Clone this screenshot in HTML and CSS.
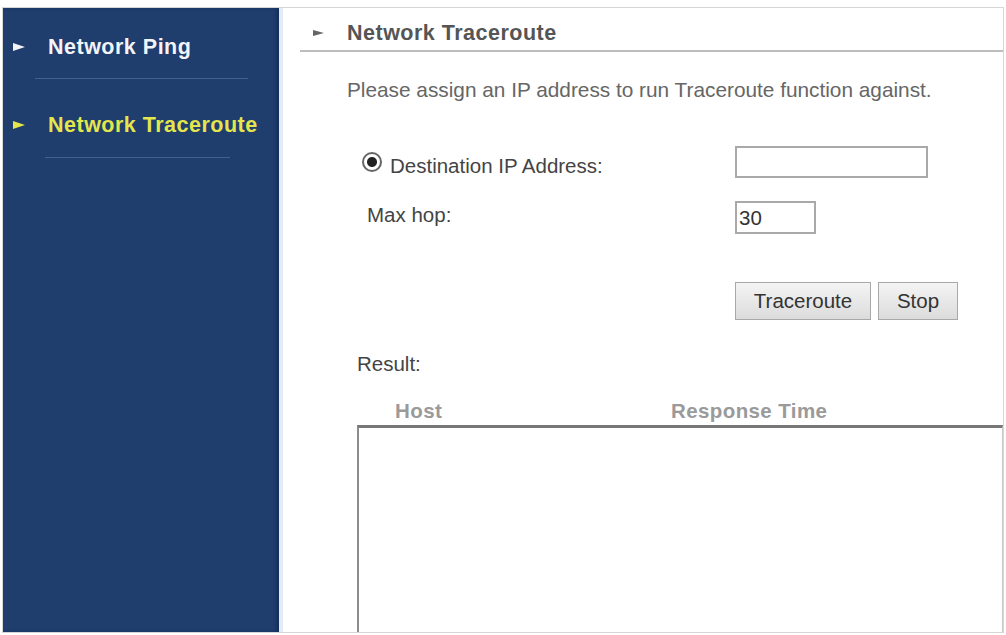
FILE: index.html
```html
<!DOCTYPE html>
<html>
<head>
<meta charset="utf-8">
<link rel="stylesheet" href="styles.css">
</head>
<body>
<div class="frame">
  <nav class="sidebar">
    <div class="nav-item nav-ping"><span class="tri"></span><span class="nav-text">Network Ping</span></div>
    <div class="divider div-1"></div>
    <div class="nav-item nav-trace active"><span class="tri"></span><span class="nav-text">Network Traceroute</span></div>
    <div class="divider div-2"></div>
  </nav>
  <main class="main">
    <div class="page-head"><span class="head-tri"></span><span class="head-text">Network Traceroute</span></div>
    <p class="desc">Please assign an IP address to run Traceroute function against.</p>
    <div class="form">
      <div class="row row-dest">
        <label class="lbl lbl-radio"><input type="radio" class="radio" checked><span>Destination IP Address:</span></label>
        <input type="text" class="field field-ip">
      </div>
      <div class="row row-hop">
        <label class="lbl lbl-hop">Max hop:</label>
        <input type="text" class="field field-hop" value="30">
      </div>
      <div class="buttons">
        <button class="btn btn-trace">Traceroute</button>
        <button class="btn btn-stop">Stop</button>
      </div>
    </div>
    <div class="result-label">Result:</div>
    <div class="result-head"><span class="col-host">Host</span><span class="col-time">Response Time</span></div>
    <div class="result-box"></div>
  </main>
</div>
</body>
</html>
```

FILE: styles.css
```css
html, body {
  margin: 0;
  padding: 0;
  background: #ffffff;
}
body {
  font-family: "Liberation Sans", Arial, sans-serif;
  width: 1006px;
  height: 635px;
  overflow: hidden;
}
.frame {
  margin-top: 7px;
  margin-left: 2px;
  width: 1000px;
  height: 624px;
  border: 1px solid #d6d6d6;
  display: flex;
  overflow: hidden;
  background: #ffffff;
}
.sidebar {
  width: 276px;
  flex: none;
  background: #1f3d6d;
  border-right: 4px solid #e3ebf6;
  box-shadow: inset -3px 0 3px rgba(10, 30, 70, 0.35);
}
.nav-item {
  display: flex;
  align-items: center;
  height: 26px;
  font-weight: bold;
  font-size: 21.5px;
  color: #f2f4f8;
  letter-spacing: 0.5px;
}
.nav-ping {
  padding-top: 26px;
  padding-bottom: 18px;
}
.nav-trace {
  padding-top: 33px;
  padding-bottom: 19px;
}
.nav-item.active {
  color: #e4e64c;
}
.tri {
  width: 0;
  height: 0;
  border-top: 4.5px solid transparent;
  border-bottom: 4.5px solid transparent;
  border-left: 12px solid currentColor;
  margin-left: 10px;
  margin-right: 23px;
}
.divider {
  height: 1px;
  background: #40608f;
}
.div-1 {
  margin-left: 32px;
  width: 213px;
}
.div-2 {
  margin-left: 42px;
  width: 185px;
}
.main {
  flex: 1;
  min-width: 0;
  position: relative;
}
.page-head {
  margin-left: 17px;
  padding-top: 12px;
  padding-bottom: 4px;
  border-bottom: 2px solid #bdbdbd;
  display: flex;
  align-items: center;
  height: 26px;
}
.head-tri {
  width: 0;
  height: 0;
  border-top: 3.5px solid transparent;
  border-bottom: 3.5px solid transparent;
  border-left: 11px solid #666;
  margin-left: 13px;
  margin-right: 23px;
}
.head-text {
  font-weight: bold;
  font-size: 21.5px;
  color: #555;
  letter-spacing: 0.5px;
}
.desc {
  margin: 25px 0 0 64px;
  font-size: 20.8px;
  line-height: 26px;
  color: #666;
}
.form {
  margin-top: 43px;
}
.row {
  display: grid;
  grid-template-columns: 373px auto;
  align-items: start;
  margin-left: 79px;
}
.lbl {
  font-size: 20.5px;
  line-height: 26px;
  color: #444;
}
.lbl-radio {
  display: flex;
  align-items: center;
  margin-top: 3px;
}
.lbl-radio span {
  margin-left: 8px;
  position: relative;
  top: 4px;
}
.radio {
  appearance: none;
  -webkit-appearance: none;
  margin: 0;
  width: 20px;
  height: 20px;
  border: 2px solid #666;
  border-radius: 50%;
  box-sizing: border-box;
  background: radial-gradient(circle, #222 0, #222 4.5px, #fff 5.5px);
}
.lbl-hop {
  padding-left: 5px;
  margin-top: 1px;
}
.field {
  box-sizing: border-box;
  border: 2px solid #a9a9a9;
  background: #fff;
  font-family: "Liberation Sans", Arial, sans-serif;
  font-size: 20.5px;
  color: #333;
  padding: 0 2px;
  margin: 0;
  outline: none;
}
.field-ip {
  width: 193px;
  height: 32px;
}
.field-hop {
  width: 81px;
  height: 33px;
}
.row-hop {
  margin-top: 23px;
}
.buttons {
  margin-top: 48px;
  margin-left: 452px;
  display: flex;
  gap: 7px;
}
.btn {
  height: 38px;
  box-sizing: border-box;
  border: 1px solid #a8a8a8;
  background: linear-gradient(#f4f4f4, #dcdcdc);
  font-family: "Liberation Sans", Arial, sans-serif;
  font-size: 20.5px;
  color: #333;
  padding: 0;
  margin: 0;
}
.btn-trace {
  width: 136px;
}
.btn-stop {
  width: 80px;
}
.result-label {
  margin: 31px 0 0 74px;
  font-size: 20.5px;
  line-height: 26px;
  color: #444;
}
.result-head {
  margin: 21px 0 0 74px;
  height: 26px;
  line-height: 26px;
  display: flex;
  font-weight: bold;
  font-size: 20.5px;
  letter-spacing: 0.4px;
  color: #9a9a9a;
}
.col-host {
  margin-left: 38px;
  width: 276px;
}
.col-time {
  margin-left: 0;
}
.result-box {
  margin-left: 74px;
  margin-top: 1px;
  height: 300px;
  border-top: 3px solid #777;
  border-left: 2px solid #8c8c8c;
  border-right: 1px solid #c8c8c8;
}
```
